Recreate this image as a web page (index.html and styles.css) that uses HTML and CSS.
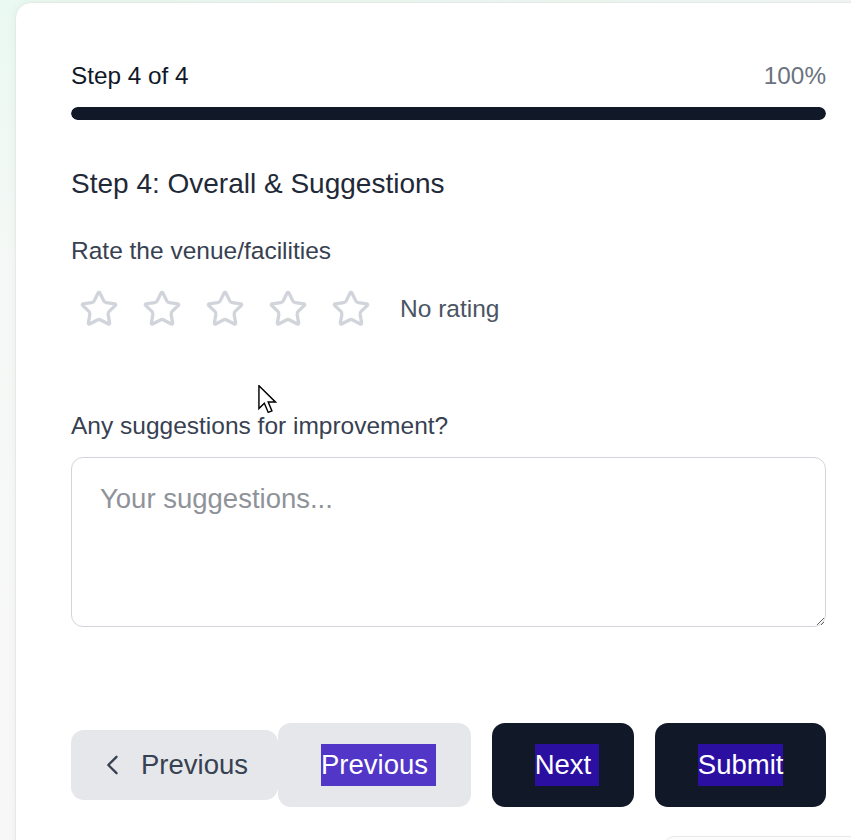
FILE: index.html
```html
<!DOCTYPE html>
<html lang="en">
<head>
<meta charset="utf-8">
<title>Feedback – Step 4</title>
<link rel="stylesheet" href="styles.css">
</head>
<body>
<main class="card">
  <div class="progress-head">
    <span class="step-count">Step 4 of 4</span>
    <span class="percent">100%</span>
  </div>
  <div class="progress-track"><div class="progress-fill" style="width:100%"></div></div>

  <h2 class="step-title">Step 4: Overall &amp; Suggestions</h2>

  <section class="rating">
    <p class="field-label">Rate the venue/facilities</p>
    <div class="stars">
      <svg class="star" viewBox="0 0 24 24"><path d="M11.525 2.295a.53.53 0 0 1 .95 0l2.31 4.679a2.123 2.123 0 0 0 1.595 1.16l5.166.756a.53.53 0 0 1 .294.904l-3.736 3.638a2.123 2.123 0 0 0-.611 1.878l.882 5.14a.53.53 0 0 1-.771.56l-4.618-2.428a2.122 2.122 0 0 0-1.973 0L6.396 21.01a.53.53 0 0 1-.77-.56l.881-5.139a2.122 2.122 0 0 0-.611-1.879L2.16 9.795a.53.53 0 0 1 .294-.906l5.165-.755a2.122 2.122 0 0 0 1.597-1.16z"/></svg>
      <svg class="star" viewBox="0 0 24 24"><path d="M11.525 2.295a.53.53 0 0 1 .95 0l2.31 4.679a2.123 2.123 0 0 0 1.595 1.16l5.166.756a.53.53 0 0 1 .294.904l-3.736 3.638a2.123 2.123 0 0 0-.611 1.878l.882 5.14a.53.53 0 0 1-.771.56l-4.618-2.428a2.122 2.122 0 0 0-1.973 0L6.396 21.01a.53.53 0 0 1-.77-.56l.881-5.139a2.122 2.122 0 0 0-.611-1.879L2.16 9.795a.53.53 0 0 1 .294-.906l5.165-.755a2.122 2.122 0 0 0 1.597-1.16z"/></svg>
      <svg class="star" viewBox="0 0 24 24"><path d="M11.525 2.295a.53.53 0 0 1 .95 0l2.31 4.679a2.123 2.123 0 0 0 1.595 1.16l5.166.756a.53.53 0 0 1 .294.904l-3.736 3.638a2.123 2.123 0 0 0-.611 1.878l.882 5.14a.53.53 0 0 1-.771.56l-4.618-2.428a2.122 2.122 0 0 0-1.973 0L6.396 21.01a.53.53 0 0 1-.77-.56l.881-5.139a2.122 2.122 0 0 0-.611-1.879L2.16 9.795a.53.53 0 0 1 .294-.906l5.165-.755a2.122 2.122 0 0 0 1.597-1.16z"/></svg>
      <svg class="star" viewBox="0 0 24 24"><path d="M11.525 2.295a.53.53 0 0 1 .95 0l2.31 4.679a2.123 2.123 0 0 0 1.595 1.16l5.166.756a.53.53 0 0 1 .294.904l-3.736 3.638a2.123 2.123 0 0 0-.611 1.878l.882 5.14a.53.53 0 0 1-.771.56l-4.618-2.428a2.122 2.122 0 0 0-1.973 0L6.396 21.01a.53.53 0 0 1-.77-.56l.881-5.139a2.122 2.122 0 0 0-.611-1.879L2.16 9.795a.53.53 0 0 1 .294-.906l5.165-.755a2.122 2.122 0 0 0 1.597-1.16z"/></svg>
      <svg class="star" viewBox="0 0 24 24"><path d="M11.525 2.295a.53.53 0 0 1 .95 0l2.31 4.679a2.123 2.123 0 0 0 1.595 1.16l5.166.756a.53.53 0 0 1 .294.904l-3.736 3.638a2.123 2.123 0 0 0-.611 1.878l.882 5.14a.53.53 0 0 1-.771.56l-4.618-2.428a2.122 2.122 0 0 0-1.973 0L6.396 21.01a.53.53 0 0 1-.77-.56l.881-5.139a2.122 2.122 0 0 0-.611-1.879L2.160 9.795a.53.53 0 0 1 .294-.906l5.165-.755a2.122 2.122 0 0 0 1.597-1.16z"/></svg>
      <span class="rating-text">No rating</span>
    </div>
  </section>

  <section class="suggest">
    <label class="field-label" for="sugg">Any suggestions for improvement?</label>
    <textarea id="sugg" class="textbox" placeholder="Your suggestions..."></textarea>
  </section>

  <div class="actions">
    <button class="btn btn-back">
      <svg class="chev" viewBox="0 0 24 24"><path d="M15 19l-7-7 7-7"/></svg>
      <span>Previous</span>
    </button>
    <div class="actions-right">
      <button class="btn btn-light btn-trail"><span class="hl hl-light">Previous&nbsp;</span></button>
      <button class="btn btn-dark btn-trail"><span class="hl hl-dark">Next&nbsp;</span></button>
      <button class="btn btn-dark"><span class="hl hl-dark">Submit</span></button>
    </div>
  </div>

  <div class="peek"></div>

  <svg class="cursor" viewBox="0 0 13 21"><path d="M0.5 0.5 L0.5 16.5 L4.3 12.8 L7 19.2 L9.6 18.1 L7 11.9 L12 11.9 Z"/></svg>
</main>
</body>
</html>
```

FILE: styles.css
```css
html, body {
  margin: 0;
  padding: 0;
  height: 100%;
  overflow: hidden;
}

body {
  font-family: "Liberation Sans", Arial, sans-serif;
  background: linear-gradient(165deg, #eaf9f2 0%, #f5f8f6 25%, #f8f8f8 60%, #f7f7f7 100%);
}

.card {
  position: relative;
  box-sizing: border-box;
  width: 867px;
  margin: 2px 0 0 15px;
  padding: 56px 55px 40px 55px;
  background: #ffffff;
  border: 1px solid #e3ebe7;
  border-radius: 16px;
  box-shadow: 0 0 10px rgba(0, 0, 0, 0.05);
  min-height: 900px;
}

.progress-head {
  display: flex;
  justify-content: space-between;
  align-items: center;
  height: 34px;
  font-size: 24.3px;
}

.step-count { color: #111827; }
.percent { color: #6b7280; }

.progress-track {
  margin-top: 14px;
  height: 13px;
  border-radius: 7px;
  background: #e5e7eb;
  overflow: hidden;
}

.progress-fill {
  height: 100%;
  background: #111827;
  border-radius: 7px;
}

.step-title {
  margin: 44px 0 0 0;
  font-size: 28px;
  line-height: 40px;
  font-weight: normal;
  color: #1f2937;
}

.rating {
  margin-top: 29px;
}

.field-label {
  display: block;
  margin: 0;
  font-size: 24.5px;
  line-height: 36px;
  color: #374151;
}

.stars {
  display: flex;
  align-items: center;
  gap: 23px;
  margin-top: 20px;
  padding-left: 8px;
  height: 40px;
}

.star {
  width: 40px;
  height: 40px;
  fill: none;
  stroke: #d1d5db;
  stroke-width: 2;
  stroke-linejoin: round;
}

.rating-text {
  margin-left: 6px;
  font-size: 24.5px;
  color: #4b5563;
}

.suggest {
  margin-top: 79px;
}

.textbox {
  display: block;
  box-sizing: border-box;
  width: 100%;
  height: 170px;
  margin-top: 13px;
  padding: 20px 28px;
  border: 1px solid #d1d5db;
  border-radius: 12px;
  font-family: "Liberation Sans", Arial, sans-serif;
  font-size: 27.5px;
  line-height: 42px;
  color: #111827;
  background: #ffffff;
  resize: vertical;
  outline: none;
}

.textbox::placeholder {
  color: #8f9399;
}

.actions {
  display: flex;
  justify-content: space-between;
  align-items: center;
  margin-top: 96px;
}

.actions-right {
  display: flex;
  gap: 21px;
}

.btn {
  display: flex;
  align-items: center;
  border: none;
  border-radius: 13px;
  font-family: "Liberation Sans", Arial, sans-serif;
  font-size: 27.5px;
  line-height: 42px;
  padding: 21px 43px;
  cursor: pointer;
}

.btn-trail {
  padding-right: 35px;
}

.btn-back {
  padding: 14px 30px 14px 28px;
  gap: 14px;
  background: #e5e7eb;
  color: #374151;
}

.chev {
  width: 28px;
  height: 28px;
  fill: none;
  stroke: #374151;
  stroke-width: 2;
  stroke-linecap: round;
  stroke-linejoin: round;
}

.btn-light {
  background: #e5e7eb;
}

.btn-dark {
  background: #111827;
}

.hl {
  color: #ffffff;
  white-space: pre;
}

.hl-light { background: #5236c8; }
.hl-dark { background: #2b0fa1; }

.peek {
  margin: 29px -60px 0 auto;
  width: 220px;
  height: 40px;
  border: 1px solid #e5e7eb;
  border-radius: 10px;
  background: #fcfcfc;
}

.cursor {
  position: absolute;
  left: 242px;
  top: 382px;
  width: 19px;
  height: 30px;
  fill: #ffffff;
  stroke: #000000;
  stroke-width: 1;
  stroke-linejoin: miter;
}
```
